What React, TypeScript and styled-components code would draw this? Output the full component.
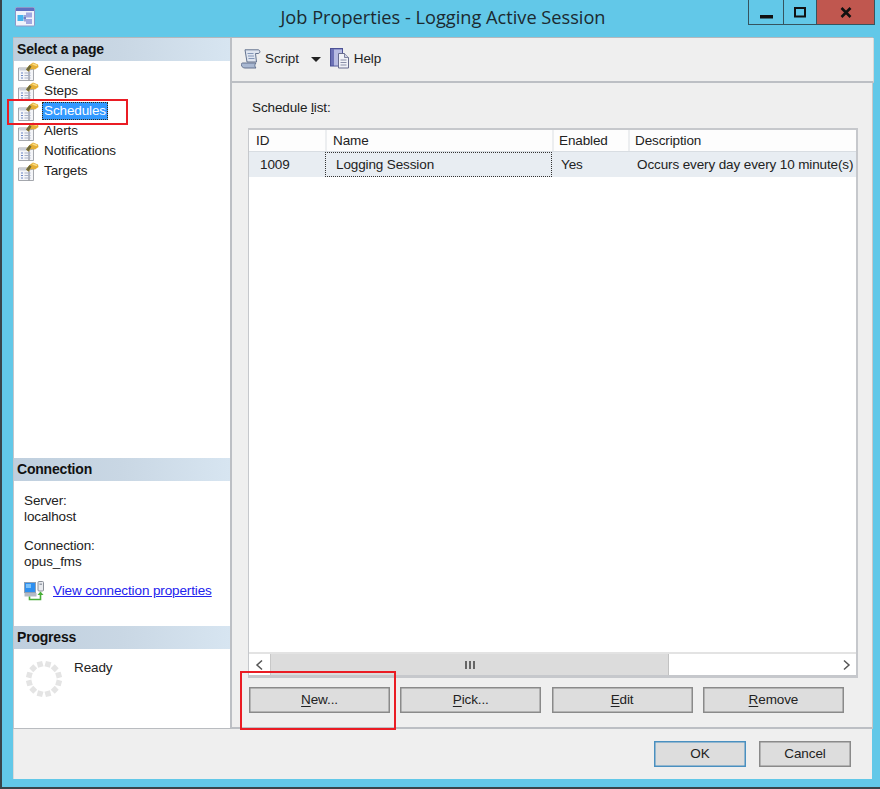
import React from 'react';
import styled, { createGlobalStyle } from 'styled-components';

const GlobalStyle = createGlobalStyle`
  html, body {
    margin: 0;
    padding: 0;
    background: #62c8e8;
  }
  body {
    font-family: 'Liberation Sans', Arial, sans-serif;
    font-size: 13.5px;
    letter-spacing: -0.12px;
    color: #222;
  }
`;

const Frame = styled.div`
  position: relative;
  box-sizing: border-box;
  width: 880px;
  height: 789px;
  display: flex;
  flex-direction: column;
  background: #62c8e8;
  border-left: 2px solid #39444a;
  border-bottom: 2px solid #39444a;
  overflow: hidden;
`;

const TitleBar = styled.div`
  flex: 0 0 37px;
  display: grid;
  grid-template-columns: 1fr auto 1fr;
  align-items: start;
`;

const AppIcon = styled.div`
  margin: 7px 0 0 13px;
  width: 20px;
  height: 20px;
`;

const Title = styled.div`
  margin: 5px 0 0 4px;
  font-family: 'Open Sans', 'Liberation Sans', sans-serif;
  font-size: 18.2px;
  letter-spacing: 0;
  line-height: 24px;
  color: #1c2a30;
  white-space: nowrap;
`;

const Controls = styled.div`
  justify-self: end;
  display: flex;
  height: 25px;
  margin-right: 5px;
  box-sizing: border-box;
  border: 1px solid #35545f;
  border-top: 0;
`;

const Control = styled.div<{ $w: number; $close?: boolean }>`
  width: ${(p) => p.$w}px;
  display: flex;
  align-items: center;
  justify-content: center;
  background: ${(p) => (p.$close ? '#c0574f' : 'transparent')};
  & + & {
    border-left: 1px solid #35545f;
  }
`;

const Client = styled.div`
  flex: 1;
  display: flex;
  flex-direction: column;
  margin: 0 7px 8px 11px;
  min-height: 0;
`;

const Main = styled.div`
  flex: 1;
  display: flex;
  min-height: 0;
  border-top: 1px solid #b4b8bd;
`;

const Sidebar = styled.div`
  flex: 0 0 216px;
  display: flex;
  flex-direction: column;
  background: #fff;
  border-left: 1px solid #c3c6cb;
  border-right: 2px solid #bcbfc4;
  border-bottom: 1px solid #b9bcc0;
`;

const SectionHead = styled.div`
  flex: 0 0 23px;
  height: 23px;
  padding-left: 3px;
  font-weight: bold;
  font-size: 14px;
  letter-spacing: -0.2px;
  line-height: 22px;
  color: #111;
  background: linear-gradient(90deg, #bfcfde 0%, #c9d7e4 50%, #d7e5f1 100%);
`;

const Pages = styled.div`
  flex: 1;
`;

const PageRow = styled.div`
  height: 20px;
  display: flex;
  align-items: center;
  padding-left: 4px;
  gap: 6px;
`;

const PageLabel = styled.span<{ $active?: boolean }>`
  box-sizing: border-box;
  height: 18px;
  line-height: 16px;
  padding: 0 1px;
  margin-left: -3px;
  color: ${(p) => (p.$active ? '#fff' : '#222')};
  background: ${(p) => (p.$active ? '#3399ff' : 'transparent')};
  border: 1px dotted ${(p) => (p.$active ? '#3a2a10' : 'transparent')};
`;

const ConnectionBody = styled.div`
  flex: 0 0 145px;
  box-sizing: border-box;
  padding: 12px 0 0 10px;
  line-height: 16px;
`;

const InfoGroup = styled.div`
  margin-bottom: 13px;
`;

const LinkRow = styled.div`
  display: flex;
  align-items: center;
  gap: 8px;
  margin-top: -2px;
`;

const Link = styled.a`
  color: #2222ee;
  text-decoration: underline;
`;

const ProgressBody = styled.div`
  flex: 0 0 79px;
  box-sizing: border-box;
  display: flex;
  padding: 10px 0 0 10px;
  gap: 10px;
  line-height: 18px;
`;

const Right = styled.div`
  flex: 1;
  display: flex;
  flex-direction: column;
  min-width: 0;
  background: #efefef;
`;

const Toolbar = styled.div`
  flex: 0 0 45px;
  box-sizing: border-box;
  height: 45px;
  display: flex;
  align-items: center;
  padding: 0 0 2px 9px;
  border-bottom: 2px solid #bcbfc4;
  margin-right: -1px;
  border-right: 1px solid #d8d8d8;
`;

const ToolLabel = styled.span`
  margin-left: 4px;
`;

const Caret = styled.span`
  width: 0;
  height: 0;
  margin: 1px 9px 0 12px;
  border-left: 5px solid transparent;
  border-right: 5px solid transparent;
  border-top: 5px solid #222;
`;

const Pane = styled.div`
  flex: 1;
  display: flex;
  flex-direction: column;
  min-height: 0;
  padding: 16px 14px 0 16px;
  border-right: 1px solid #c8c8c8;
  border-bottom: 2px solid #bcbfc4;
`;

const ListLabel = styled.div`
  line-height: 18px;
  margin: 0 0 11px 4px;
`;

const Grid = styled.div`
  height: 550px;
  box-sizing: border-box;
  display: flex;
  flex-direction: column;
  background: #fff;
  border: 2px solid #c6c8cc;
  border-bottom-width: 3px;
  border-left-width: 1px;
`;

const Cols = styled.div`
  display: grid;
  grid-template-columns: 76px 227px 76px 1fr;
`;

const HeadRow = styled(Cols)`
  height: 21px;
  border-bottom: 1px solid #d8dde2;
`;

const HeadCell = styled.div<{ $pad: number }>`
  padding-left: ${(p) => p.$pad}px;
  line-height: 22px;
  background: #fdfdfd;
  white-space: nowrap;
  overflow: hidden;
  & + & {
    border-left: 2px solid #eceef0;
  }
`;

const DataRow = styled(Cols)`
  height: 25px;
  background: #e8edf2;
`;

const DataCell = styled.div<{ $focus?: boolean; $pad: number }>`
  box-sizing: border-box;
  padding-left: ${(p) => p.$pad}px;
  line-height: ${(p) => (p.$focus ? '23px' : '25px')};
  white-space: nowrap;
  overflow: hidden;
  border: ${(p) => (p.$focus ? '1px dotted #333' : '0')};
`;

const ListBody = styled.div`
  flex: 1;
`;

const HScroll = styled.div`
  flex: 0 0 21px;
  display: flex;
  border-top: 2px solid #e3e3e3;
  background: #fff;
`;

const ScrollButton = styled.div`
  flex: 0 0 20px;
  display: flex;
  align-items: center;
  justify-content: center;
`;

const ScrollTrack = styled.div`
  flex: 1;
  display: flex;
  background: #fff;
`;

const ScrollThumb = styled.div`
  width: 397px;
  margin-left: 1px;
  display: flex;
  align-items: center;
  justify-content: center;
  background: #dcdcdc;
  border-right: 1px solid #c2c2c2;
  border-left: 1px solid #c8c8c8;
`;

const Grip = styled.div`
  width: 10px;
  height: 8px;
  background: repeating-linear-gradient(90deg, #666 0 2px, transparent 2px 4px);
`;

const ButtonRow = styled.div`
  display: flex;
  gap: 10.3px;
  margin: 9px 0 0 1px;
`;

const Button = styled.div<{ $w: number; $primary?: boolean }>`
  box-sizing: border-box;
  width: ${(p) => p.$w}px;
  height: 26px;
  line-height: 24px;
  text-align: center;
  color: #222;
  background: #dddddd;
  border: 1px solid ${(p) => (p.$primary ? '#4a90c0' : '#8a8a8a')};
  box-shadow: inset 0 0 0 0.5px ${(p) => (p.$primary ? '#4a90c0' : '#8a8a8a')};
  u {
    text-underline-offset: 2px;
  }
`;

const Footer = styled.div`
  flex: 0 0 50px;
  display: flex;
  justify-content: flex-end;
  align-items: flex-start;
  gap: 13px;
  box-sizing: border-box;
  padding: 12px 21px 0 0;
  margin-right: 1px;
  background: #efefef;
  border-left: 1px solid #d9d9d9;
`;

const Annotation = styled.div`
  position: absolute;
  box-sizing: border-box;
  border: 2px solid #ea1c24;
  pointer-events: none;
`;

const SchedulesMark = styled(Annotation)`
  left: 5px;
  top: 99px;
  width: 121px;
  height: 26px;
`;

const NewMark = styled(Annotation)`
  left: 238px;
  top: 671px;
  width: 156px;
  height: 59px;
`;

function PageIcon() {
  return (
    <svg width="21" height="19" viewBox="0 0 21 19" style={{ flex: 'none' }}>
      <path d="M0.500 6 H11 V18.500 H0.500 Z M11 8 L15.500 7 V18.500 H11 Z" fill="#f4f5f8" stroke="#9a9da4" strokeWidth="0.9" />
      <rect x="1.500" y="6.500" width="9" height="2" fill="#c9cdd6" />
      <path d="M3 11h2M3 13.500h2M3 16h2" stroke="#6a86c4" strokeWidth="1.200" />
      <path d="M6.500 11h6M6.500 13.500h6M6.500 16h6" stroke="#a9b1c6" strokeWidth="1" />
      <path d="M8 7.500 L11.500 3 L15 0.500 L20 2.500 L20.500 5 L17 7.500 L13 7 L10.500 9.500 Z" fill="#e5ae35" />
      <path d="M8 7.500 L11.500 3 L13.500 4.500 L10.500 9.500 Z" fill="#6f6a3a" />
      <path d="M14.500 2 L19 3.500" stroke="#f8dc84" strokeWidth="1.400" />
    </svg>
  );
}

function WindowIcon() {
  return (
    <svg width="20" height="20" viewBox="0 0 20 20">
      <rect x="0.500" y="0.500" width="19" height="18.500" rx="1" fill="#f0f3fb" stroke="#8d97c8" />
      <rect x="1" y="1" width="18" height="3" fill="#5f6fc0" />
      <rect x="2.500" y="8" width="6" height="6" fill="#46b4ee" />
      <rect x="11" y="5.500" width="6" height="5" fill="#a0a8e0" />
      <rect x="11" y="12" width="6" height="5" fill="#a0a8e0" />
      <path d="M8.500 11h2.500M10 8v6.500" stroke="#4858b0" strokeWidth="1" fill="none" />
    </svg>
  );
}

function ScriptIcon() {
  return (
    <svg width="20" height="20" viewBox="0 0 20 20" style={{ flex: 'none' }}>
      <path d="M4 0.800 H17 C19.500 0.800 19.500 4.500 17 4.500 H14.500 L15.500 13 H6 Z" fill="#dfe5f0" stroke="#64738f" />
      <path d="M1.500 14 H15 C13.500 15 13.500 18 15 19 H4 C0 19 -0.500 14 1.500 14 Z" fill="#a9b8d2" stroke="#64738f" />
      <path d="M6.500 4.500h6M7 7h6M7.500 9.500h6" stroke="#8496b8" strokeWidth="1" />
    </svg>
  );
}

function HelpIcon() {
  return (
    <svg width="20" height="21" viewBox="0 0 20 21" style={{ flex: 'none' }}>
      <rect x="0.500" y="0.500" width="12" height="17.500" fill="#6d72b6" stroke="#4d5296" />
      <rect x="4" y="1.500" width="8" height="16" fill="#b8bce2" />
      <path d="M8.500 5.500 H14.500 L18.500 9.500 V20 H8.500 Z" fill="#f1f2f7" stroke="#686d8e" />
      <path d="M14.500 5.500 V9.500 H18.500" fill="#cfd2e4" stroke="#686d8e" strokeWidth="0.800" />
      <path d="M10.500 12h6M10.500 14.500h6M10.500 17h6" stroke="#8a8fa8" strokeWidth="1" />
    </svg>
  );
}

function ConnectionIcon() {
  return (
    <svg width="21" height="20" viewBox="0 0 21 20" style={{ flex: 'none' }}>
      <rect x="0.500" y="1.500" width="11" height="10" fill="#2d8ff0" stroke="#8fa0b4" />
      <rect x="2" y="3" width="5" height="4" fill="#7cc2fa" />
      <rect x="0.500" y="12" width="12" height="3.500" fill="#b4bac4" />
      <rect x="14" y="0.500" width="5.500" height="9.500" rx="1" fill="#e8eaee" stroke="#8a8f98" />
      <rect x="15.500" y="2.500" width="2.500" height="1.500" fill="#9aa0aa" />
      <path d="M5.500 15.500 V18.500 H16.500 V13" fill="none" stroke="#48ad38" strokeWidth="1.600" />
      <path d="M13.500 14 L16.500 10.500 L19.500 14 Z" fill="#48ad38" />
    </svg>
  );
}

function Spinner() {
  const cx = 20;
  const cy = 20;
  return (
    <svg width="40" height="40" viewBox="0 0 40 40" style={{ flex: 'none' }}>
      {Array.from({ length: 12 }, (_, i) => (
        <rect
          key={i}
          x={cx - 2.8}
          y={2}
          width="5.600"
          height="5.600"
          fill="#e4e4e4"
          transform={`rotate(${i * 30 + 15} ${cx} ${cy})`}
        />
      ))}
    </svg>
  );
}

const pages = ['General', 'Steps', 'Schedules', 'Alerts', 'Notifications', 'Targets'];

export default function App() {
  return (
    <>
      <GlobalStyle />
      <Frame>
        <TitleBar>
          <AppIcon>
            <WindowIcon />
          </AppIcon>
          <Title>Job Properties - Logging Active Session</Title>
          <Controls>
            <Control $w={34}>
              <svg width="13" height="13" viewBox="0 0 13 13">
                <rect x="0" y="9" width="13" height="3.500" fill="#111" />
              </svg>
            </Control>
            <Control $w={32}>
              <svg width="13" height="11" viewBox="0 0 13 11">
                <rect x="1" y="1" width="10" height="8.500" fill="none" stroke="#111" strokeWidth="2" />
              </svg>
            </Control>
            <Control $w={57} $close>
              <svg width="12" height="11" viewBox="0 0 12 11">
                <path d="M1.500 1 L10.500 10 M10.500 1 L1.500 10" stroke="#111" strokeWidth="2.600" />
              </svg>
            </Control>
          </Controls>
        </TitleBar>
        <Client>
          <Main>
            <Sidebar>
              <SectionHead>Select a page</SectionHead>
              <Pages>
                {pages.map((p) => (
                  <PageRow key={p}>
                    <PageIcon />
                    <PageLabel $active={p === 'Schedules'}>{p}</PageLabel>
                  </PageRow>
                ))}
              </Pages>
              <SectionHead>Connection</SectionHead>
              <ConnectionBody>
                <InfoGroup>
                  <div>Server:</div>
                  <div>localhost</div>
                </InfoGroup>
                <InfoGroup>
                  <div>Connection:</div>
                  <div>opus_fms</div>
                </InfoGroup>
                <LinkRow>
                  <ConnectionIcon />
                  <Link>View connection properties</Link>
                </LinkRow>
              </ConnectionBody>
              <SectionHead>Progress</SectionHead>
              <ProgressBody>
                <Spinner />
                <span>Ready</span>
              </ProgressBody>
            </Sidebar>
            <Right>
              <Toolbar>
                <ScriptIcon />
                <ToolLabel>Script</ToolLabel>
                <Caret />
                <HelpIcon />
                <ToolLabel>Help</ToolLabel>
              </Toolbar>
              <Pane>
                <ListLabel>
                  Schedule <u>l</u>ist:
                </ListLabel>
                <Grid>
                  <HeadRow>
                    <HeadCell $pad={7}>ID</HeadCell>
                    <HeadCell $pad={6}>Name</HeadCell>
                    <HeadCell $pad={5}>Enabled</HeadCell>
                    <HeadCell $pad={5}>Description</HeadCell>
                  </HeadRow>
                  <DataRow>
                    <DataCell $pad={11}>1009</DataCell>
                    <DataCell $pad={10} $focus>
                      Logging Session
                    </DataCell>
                    <DataCell $pad={9}>Yes</DataCell>
                    <DataCell $pad={9}>Occurs every day every 10 minute(s)</DataCell>
                  </DataRow>
                  <ListBody />
                  <HScroll>
                    <ScrollButton>
                      <svg width="9" height="12" viewBox="0 0 9 12">
                        <path d="M7 1.500 L2 6 L7 10.500" fill="none" stroke="#555" strokeWidth="1.500" />
                      </svg>
                    </ScrollButton>
                    <ScrollTrack>
                      <ScrollThumb>
                        <Grip />
                      </ScrollThumb>
                    </ScrollTrack>
                    <ScrollButton>
                      <svg width="9" height="12" viewBox="0 0 9 12">
                        <path d="M2 1.500 L7 6 L2 10.500" fill="none" stroke="#555" strokeWidth="1.500" />
                      </svg>
                    </ScrollButton>
                  </HScroll>
                </Grid>
                <ButtonRow>
                  <Button $w={141}><u>N</u>ew...</Button>
                  <Button $w={141}><u>P</u>ick...</Button>
                  <Button $w={141}><u>E</u>dit</Button>
                  <Button $w={141}><u>R</u>emove</Button>
                </ButtonRow>
              </Pane>
            </Right>
          </Main>
          <Footer>
            <Button $w={92} $primary>OK</Button>
            <Button $w={92}>Cancel</Button>
          </Footer>
        </Client>
        <SchedulesMark />
        <NewMark />
      </Frame>
    </>
  );
}
